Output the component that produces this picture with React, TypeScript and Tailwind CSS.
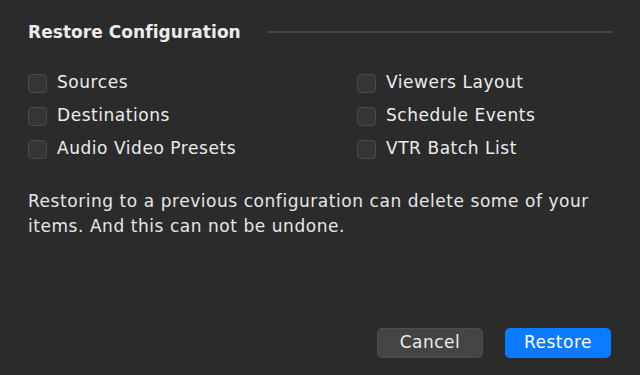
export default function App() {
  const left = ["Sources", "Destinations", "Audio Video Presets"];
  const right = ["Viewers Layout", "Schedule Events", "VTR Batch List"];
  return (
    <div
      className="w-[640px] h-[375px] bg-[#2b2b2b] text-[#ececec] flex flex-col px-[28px] pt-[19px] pb-[17px]"
      style={{ fontFamily: '"DejaVu Sans", "Liberation Sans", sans-serif' }}
    >
      <div className="flex items-center">
        <h1 className="text-[17px] font-bold leading-[26px] tracking-[0.05px]">Restore Configuration</h1>
        <div className="ml-[26px] mr-[-1px] flex-1 h-[2px] bg-[#444444]" />
      </div>
      <div className="mt-[27px] grid grid-cols-[329px_1fr] gap-y-[11px]">
        {left.map((l, i) => (
          <>
            <Check key={l} label={l} />
            <Check key={right[i]} label={right[i]} />
          </>
        ))}
      </div>
      <p className="mt-[29px] text-[17px] leading-[25px] tracking-[0.55px] text-[#e6e6e6]">
        Restoring to a previous configuration can delete some of your
        <br />
        items. And this can not be undone.
      </p>
      <div className="mt-auto flex justify-end gap-[22px] pr-[1px]">
        <button className="w-[106px] h-[30px] rounded-[5px] bg-[#444444] border border-[#4d4d4d] text-[17px] tracking-[0.5px] text-[#ececec]">
          Cancel
        </button>
        <button className="w-[106px] h-[30px] rounded-[5px] bg-[#0a7aff] text-[17px] tracking-[0.5px] text-white">
          Restore
        </button>
      </div>
    </div>
  );
}

function Check({ label }: { label: string }) {
  return (
    <label className="flex items-center gap-[10px] h-[22px]">
      <span className="w-[19px] h-[19px] rounded-[4px] bg-[#353535] border border-[#4a4a4a]" />
      <span className="text-[17px] tracking-[0.55px]">{label}</span>
    </label>
  );
}
